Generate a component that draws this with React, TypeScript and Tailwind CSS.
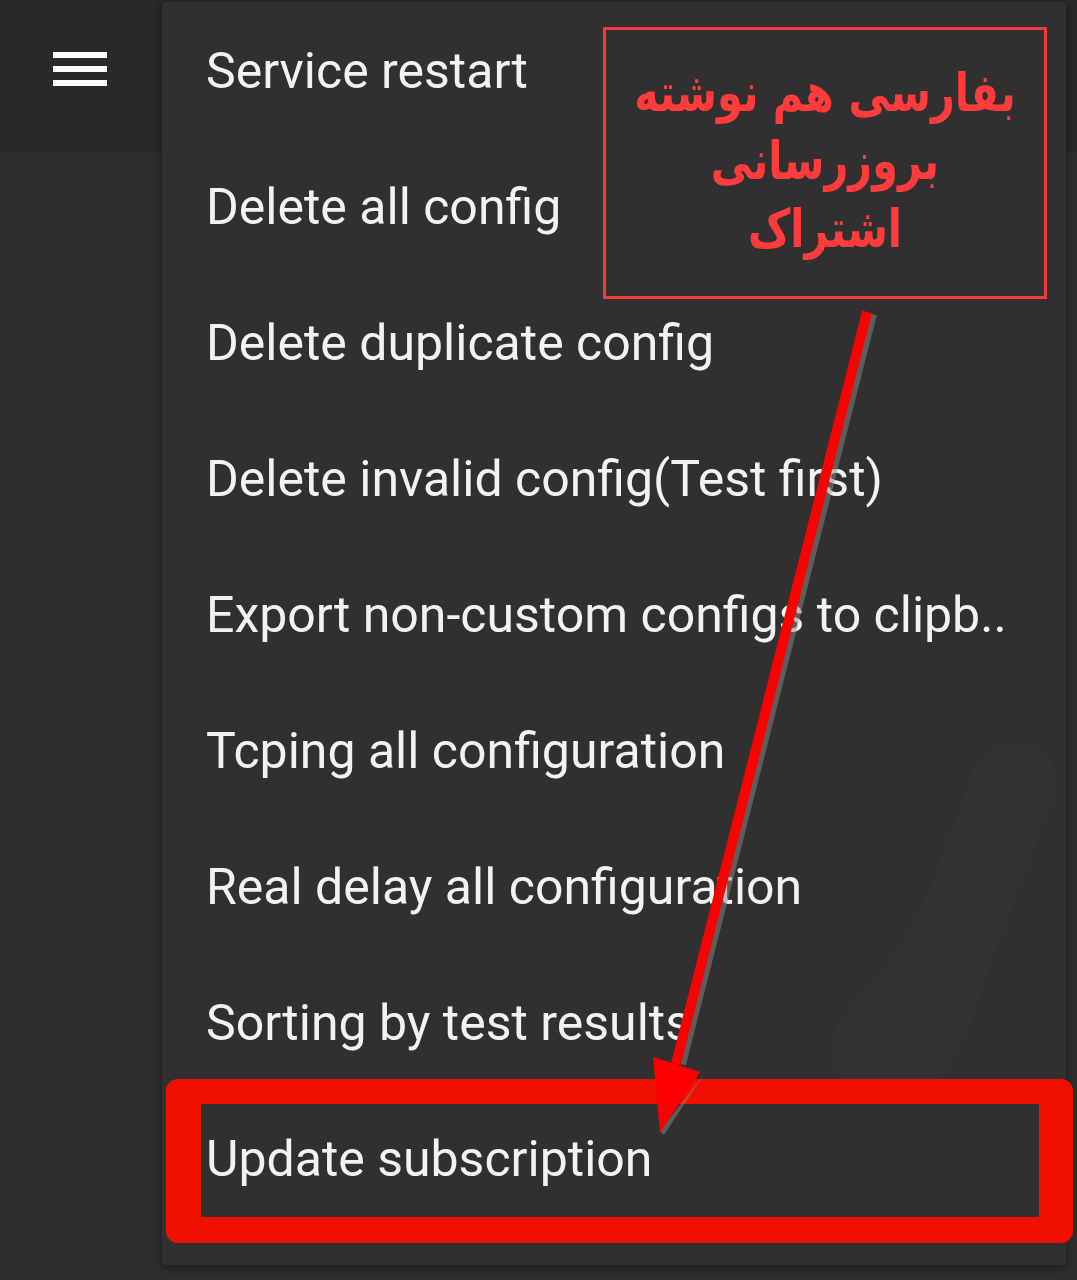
import React from "react";

const items = [
  "Service restart",
  "Delete all config",
  "Delete duplicate config",
  "Delete invalid config(Test first)",
  "Export non-custom configs to clipb..",
  "Tcping all configuration",
  "Real delay all configuration",
  "Sorting by test results",
  "Update subscription",
];

export default function App() {
  return (
    <div className="relative w-[1077px] h-[1280px] overflow-hidden bg-[#2e2e2e] font-['Roboto',sans-serif]">
      {/* top app bar */}
      <div className="h-[152px] bg-[#292929] flex items-start pt-[52px] pl-[53px]">
        <div className="flex flex-col gap-[8px]">
          <div className="w-[54px] h-[6px] bg-white" />
          <div className="w-[54px] h-[6px] bg-white" />
          <div className="w-[54px] h-[6px] bg-white" />
        </div>
      </div>

      {/* popup menu */}
      <div className="absolute left-[162px] top-[2px] w-[904px] h-[1263px] bg-[#303030] shadow-[0_2px_10px_rgba(0,0,0,0.45)] rounded-[3px] pt-[1px]">
        {/* faint ghost shape */}
        <svg className="absolute left-[640px] top-[700px]" width="260" height="420" viewBox="0 0 260 420">
          <path
            d="M215 40 C250 40 262 70 250 100 L190 260 C175 300 170 330 150 360 C130 395 95 400 70 395 C40 390 25 370 30 340 C35 310 55 300 70 280 C95 250 110 220 130 180 L170 70 C180 50 195 40 215 40 Z"
            fill="#323232"
          />
        </svg>
        <div className="relative flex flex-col">
          {items.map((t) => (
            <div
              key={t}
              className="h-[136px] flex items-center pl-[44px] text-[50px] text-[#f2f2f2] leading-none whitespace-nowrap"
            >
              {t}
            </div>
          ))}
        </div>
      </div>

      {/* annotation box */}
      <div
        dir="rtl"
        className="absolute left-[603px] top-[27px] w-[444px] h-[272px] border-[3px] border-[#f23a3a] flex flex-col items-center justify-center pb-[4px] text-[#ff3b3b] font-bold text-[46px] leading-[68px] whitespace-nowrap font-['DejaVu_Sans_Condensed','DejaVu_Sans',sans-serif]"
      >
        <div className="scale-y-[1.15]">بفارسی هم نوشته</div>
        <div className="scale-y-[1.15]">بروزرسانی</div>
        <div className="scale-y-[1.15]">اشتراک</div>
      </div>

      {/* highlight box */}
      <div className="absolute left-[166px] top-[1079px] w-[907px] h-[164px] rounded-[12px] border-solid border-[#f01000] border-l-[35px] border-t-[25px] border-r-[34px] border-b-[26px]" />

      {/* arrow */}
      <svg className="absolute left-0 top-0 pointer-events-none" width="1077" height="1280" viewBox="0 0 1077 1280">
        <line x1="872" y1="314" x2="681" y2="1064" stroke="#8a8a8a" strokeOpacity="0.5" strokeWidth="10" />
        <polygon points="704,1074 664,1135 660,1131" fill="#8a8a8a" fillOpacity="0.5" />
        <line x1="867" y1="312" x2="676" y2="1064" stroke="#ff0000" strokeWidth="10" />
        <polygon points="653,1057 700,1072 660,1133" fill="#ff0000" />
      </svg>
    </div>
  );
}
